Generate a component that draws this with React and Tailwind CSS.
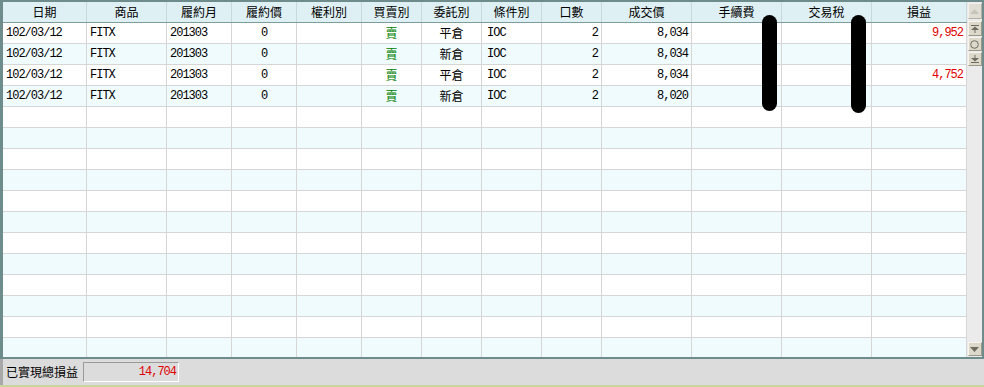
import React from "react";

const cols = [
  { label: "日期", align: "text-left pl-[3px]" },
  { label: "商品", align: "text-left pl-[3px]" },
  { label: "履約月", align: "text-left pl-[3px]" },
  { label: "履約價", align: "text-center" },
  { label: "權利別", align: "text-center" },
  { label: "買賣別", align: "text-center" },
  { label: "委託別", align: "text-center" },
  { label: "條件別", align: "text-left pl-[5px]" },
  { label: "口數", align: "text-right pr-[3px]" },
  { label: "成交價", align: "text-right pr-[3px]" },
  { label: "手續費", align: "text-right pr-[3px]" },
  { label: "交易稅", align: "text-right pr-[3px]" },
  { label: "損益", align: "text-right pr-[3px]" },
];

const rows = [
  ["102/03/12", "FITX", "201303", "0", "", "賣", "平倉", "IOC", "2", "8,034", "", "", "9,952"],
  ["102/03/12", "FITX", "201303", "0", "", "賣", "新倉", "IOC", "2", "8,034", "", "", ""],
  ["102/03/12", "FITX", "201303", "0", "", "賣", "平倉", "IOC", "2", "8,034", "", "", "4,752"],
  ["102/03/12", "FITX", "201303", "0", "", "賣", "新倉", "IOC", "2", "8,020", "", "", ""],
];

const gridCols =
  "grid grid-cols-[84px_80px_65px_65px_65px_60px_60px_60px_60px_90px_90px_90px_95px]";

const mono = "font-['Liberation_Mono','Noto_Sans_CJK_TC',monospace] tracking-[-1px]";

function Cell({ col, idx, value }) {
  let color = "text-black";
  if (idx === 5 && value) color = "text-[#008000]";
  if (idx === 12) color = "text-[#e00000]";
  const isCjk = idx === 5 || idx === 6;
  return (
    <div
      className={`h-[21px] border-r border-b border-[#d6d6d6] leading-[20px] text-[12px] overflow-hidden whitespace-nowrap ${col.align} ${color} ${
        isCjk ? "font-['Noto_Sans_CJK_TC',sans-serif]" : mono
      }`}
    >
      {value}
    </div>
  );
}

function ScrollBtn({ children, className = "" }) {
  return (
    <div
      className={`w-[14px] flex items-center justify-center bg-[#dcd9cb] border border-t-[#f6f4ec] border-l-[#f6f4ec] border-r-[#9a9888] border-b-[#9a9888] ${className}`}
    >
      {children}
    </div>
  );
}

export default function App() {
  const blank = Array.from({ length: 12 });
  return (
    <div className="relative w-[984px] h-[387px] bg-[#dcdcdc] overflow-hidden font-['Noto_Sans_CJK_TC',sans-serif]">
      {/* table frame */}
      <div className="h-[359px] flex border-l-[3px] border-t-2 border-r-2 border-b-2 border-[#6f8c8c] bg-white">
        <div className="w-[964px] overflow-hidden">
          {/* header */}
          <div className={`${gridCols} bg-[#dff0f4] border-b border-[#7c9c9e]`}>
            {cols.map((c) => (
              <div
                key={c.label}
                className="h-[20px] border-r border-[#c6dadd] text-center text-[12px] leading-[20px] text-black"
              >
                {c.label}
              </div>
            ))}
          </div>
          {/* rows */}
          {rows.map((r, ri) => (
            <div key={ri} className={`${gridCols} ${ri % 2 ? "bg-[#effbfd]" : "bg-white"}`}>
              {r.map((v, ci) => (
                <Cell key={ci} col={cols[ci]} idx={ci} value={v} />
              ))}
            </div>
          ))}
          {blank.map((_, bi) => (
            <div
              key={"b" + bi}
              className={`${gridCols} ${(rows.length + bi) % 2 ? "bg-[#effbfd]" : "bg-white"}`}
            >
              {cols.map((c, ci) => (
                <Cell key={ci} col={c} idx={ci} value="" />
              ))}
            </div>
          ))}
        </div>
        {/* scrollbar */}
        <div className="w-[15px] bg-[#ebebeb] flex flex-col items-center pt-[1px]">
          <ScrollBtn className="h-[16px] opacity-70">
            <svg width="9" height="5" viewBox="0 0 9 5">
              <polygon points="0,5 9,5 4.5,0" fill="#b8b6a8" />
            </svg>
          </ScrollBtn>
          <ScrollBtn className="h-[15px] mt-[2px]">
            <svg width="8" height="8" viewBox="0 0 8 8">
              <line x1="0" y1="0.5" x2="8" y2="0.5" stroke="#6e6c60" />
              <polygon points="0,5 8,5 4,1.5" fill="#6e6c60" />
              <line x1="4" y1="5" x2="4" y2="8" stroke="#6e6c60" />
            </svg>
          </ScrollBtn>
          <ScrollBtn className="h-[14px] mt-[1px]">
            <svg width="9" height="9" viewBox="0 0 9 9">
              <circle cx="4.5" cy="4.5" r="3.8" fill="none" stroke="#6e6c60" />
            </svg>
          </ScrollBtn>
          <ScrollBtn className="h-[14px] mt-[1px]">
            <svg width="8" height="8" viewBox="0 0 8 8">
              <line x1="4" y1="0" x2="4" y2="3" stroke="#6e6c60" />
              <polygon points="0,3 8,3 4,6.5" fill="#6e6c60" />
              <line x1="0" y1="7.5" x2="8" y2="7.5" stroke="#6e6c60" />
            </svg>
          </ScrollBtn>
          <div className="flex-1" />
          <ScrollBtn className="h-[14px] mb-[1px]">
            <svg width="9" height="5" viewBox="0 0 9 5">
              <polygon points="0,0 9,0 4.5,5" fill="#6e6c60" />
            </svg>
          </ScrollBtn>
        </div>
      </div>

      {/* bottom summary bar */}
      <div className="h-[26px] flex items-center border-l-[3px] border-[#a8a8a8] pl-[3px]">
        <span className="text-[12px] text-black w-[77px] whitespace-nowrap">已實現總損益</span>
        <div className="w-[96px] h-[20px] bg-[#dcdcdc] border border-t-[#9a9a9a] border-l-[#9a9a9a] border-r-white border-b-white text-right pr-[2px] text-[12px] leading-[18px] text-[#e00000] font-['Liberation_Mono',monospace] tracking-[-1px]">
          14,704
        </div>
      </div>
      <div className="h-[2px] bg-[#c8d4a4]" />

      {/* redaction marks */}
      <div className="absolute left-[762px] top-[15px] w-[15px] h-[96px] rounded-full bg-black" />
      <div className="absolute left-[851px] top-[15px] w-[15px] h-[98px] rounded-full bg-black" />
    </div>
  );
}
